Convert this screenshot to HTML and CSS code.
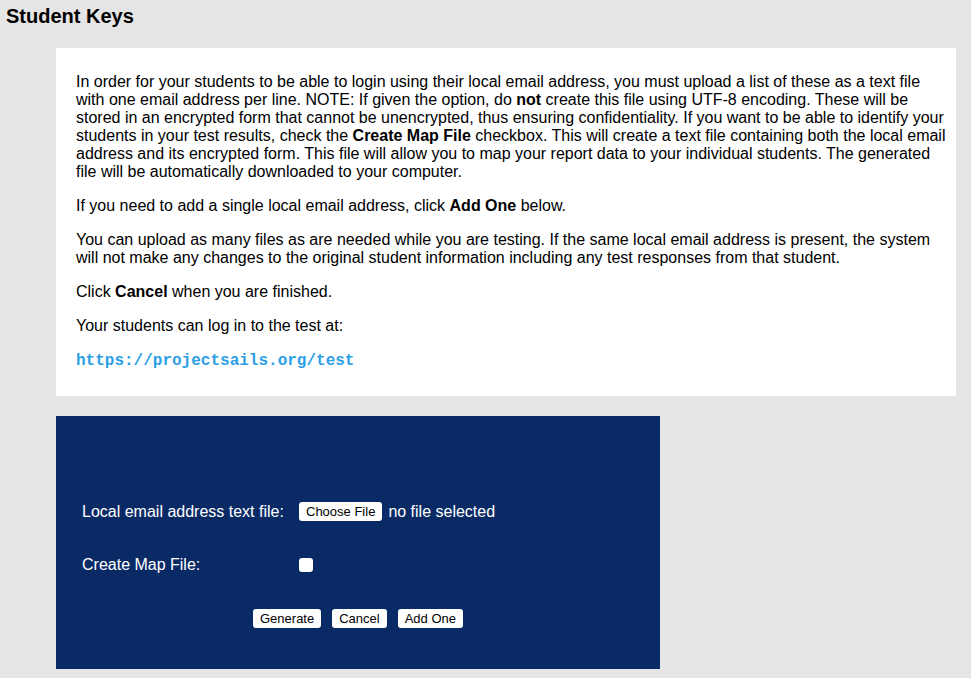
FILE: index.html
```html
<!DOCTYPE html>
<html lang="en">
<head>
<meta charset="UTF-8">
<title>Student Keys</title>
<link rel="stylesheet" href="styles.css">
</head>
<body>

<h2 class="page-title">Student Keys</h2>

<div class="info-box">
  <p>In order for your students to be able to login using their local email address, you must upload a list of these as a text file with one email address per line. NOTE: If given the option, do <b>not</b> create this file using UTF-8 encoding. These will be stored in an encrypted form that cannot be unencrypted, thus ensuring confidentiality. If you want to be able to identify your students in your test results, check the <b>Create Map File</b> checkbox. This will create a text file containing both the local email address and its encrypted form. This file will allow you to map your report data to your individual students. The generated file will be automatically downloaded to your computer.</p>
  <p>If you need to add a single local email address, click <b>Add One</b> below.</p>
  <p>You can upload as many files as are needed while you are testing. If the same local email address is present, the system will not make any changes to the original student information including any test responses from that student.</p>
  <p>Click <b>Cancel</b> when you are finished.</p>
  <p>Your students can log in to the test at:</p>
  <p><a class="test-link" href="#">https://projectsails.org/test</a></p>
</div>

<form class="upload-box">
  <div class="form-row">
    <label class="form-label">Local email address text file:</label>
    <div class="form-field">
      <button type="button" class="small-btn">Choose File</button>
      <span class="file-name">no file selected</span>
    </div>
  </div>
  <div class="form-row">
    <label class="form-label" for="mapFile">Create Map File:</label>
    <div class="form-field">
      <input type="checkbox" id="mapFile" class="check">
    </div>
  </div>
  <div class="button-row">
    <button type="button" class="small-btn">Generate</button>
    <button type="button" class="small-btn">Cancel</button>
    <button type="button" class="small-btn">Add One</button>
  </div>
</form>

</body>
</html>
```

FILE: styles.css
```css
body {
  font-family: "Liberation Sans", Arial, sans-serif;
  margin: 0;
  background-color: #e5e5e5;
  color: #000;
}
.page-title {
  font-size: 20px;
  line-height: 24px;
  margin: 0;
  padding: 4px 6px 0;
}
.info-box {
  background-color: #fff;
  margin: 20px 15px 0 56px;
  padding: 9px 8px 10px 20px;
  font-size: 16px;
  line-height: 18px;
}
.info-box p {
  margin: 16px 0;
}
.test-link {
  font-family: "Liberation Mono", "Courier New", monospace;
  font-weight: bold;
  font-size: 16px;
  color: #2d9fe6;
  text-decoration: none;
}
.upload-box {
  background-color: #0a2a66;
  width: 604px;
  margin: 20px 0 0 56px;
  padding: 86px 0 41px;
  color: #fff;
  font-size: 16px;
  line-height: 18px;
  box-sizing: border-box;
}
.form-row {
  display: flex;
  align-items: center;
  padding-left: 26px;
  margin-bottom: 35px;
}
.form-label {
  width: 217px;
}
.form-field {
  display: flex;
  align-items: center;
}
.file-name {
  margin-left: 6px;
}
.small-btn {
  font-family: "Liberation Sans", Arial, sans-serif;
  font-size: 13px;
  line-height: 15px;
  background-color: #fff;
  color: #000;
  border: none;
  border-radius: 3px;
  padding: 2px 7px;
  margin: 0;
  cursor: pointer;
}
.check {
  appearance: none;
  width: 14px;
  height: 14px;
  margin: 0;
  background-color: #fff;
  border-radius: 3px;
}
.button-row {
  display: flex;
  justify-content: center;
  gap: 11px;
  margin-top: 1px;
}
```
